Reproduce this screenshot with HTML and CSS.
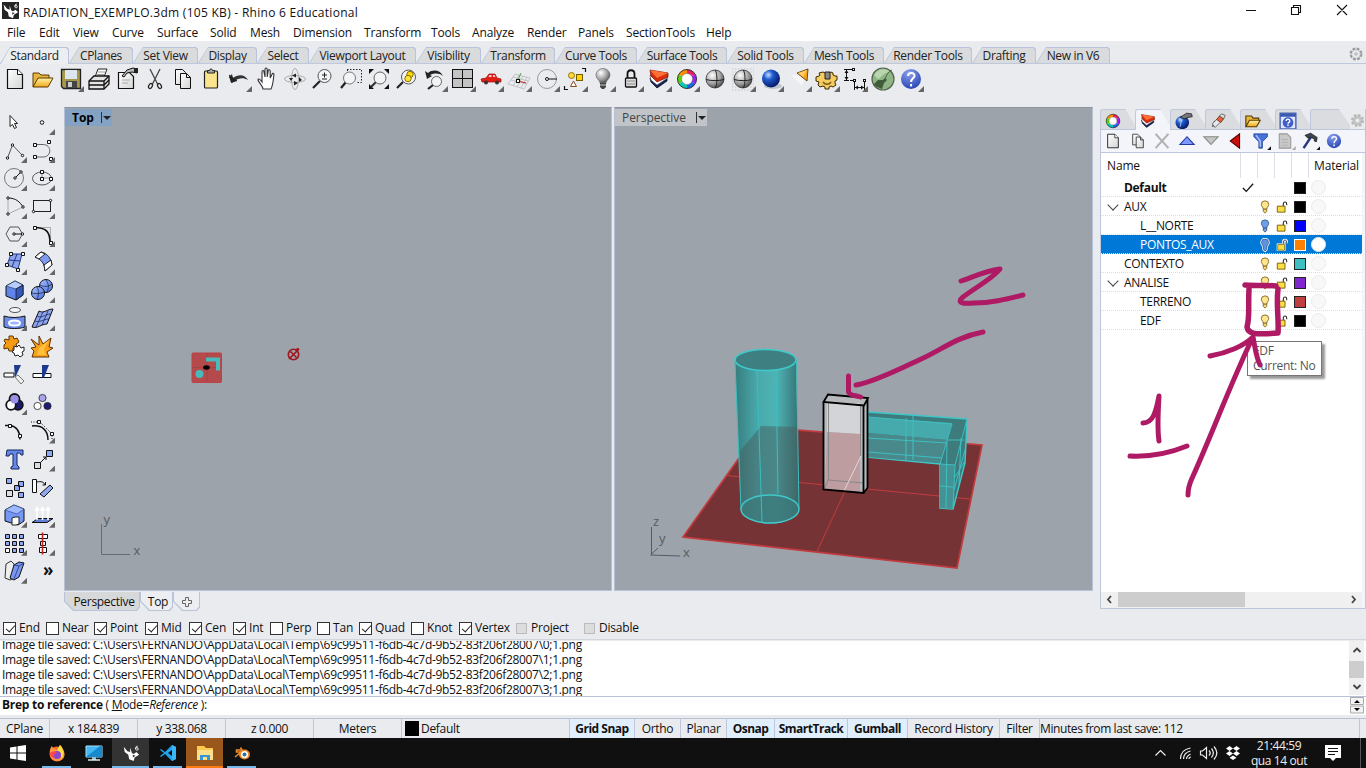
FILE: index.html
```html
<!DOCTYPE html>
<html lang="en">
<head>
<meta charset="utf-8">
<title>RADIATION_EXEMPLO.3dm (105 KB) - Rhino 6 Educational</title>
<link rel="stylesheet" href="styles.css">
</head>
<body>
<svg class="defs" aria-hidden="true">
<defs>
<linearGradient id="gY" x1="0" y1="0" x2="0" y2="1"><stop offset="0" stop-color="#fff3a8"/><stop offset="1" stop-color="#f0a818"/></linearGradient>
<linearGradient id="gW" x1="0" y1="0" x2="1" y2="1"><stop offset="0" stop-color="#fff"/><stop offset="1" stop-color="#d4d4d4"/></linearGradient>
<linearGradient id="gB" x1="0" y1="0" x2="1" y2="1"><stop offset="0" stop-color="#a9bfff"/><stop offset="1" stop-color="#4a6fe0"/></linearGradient>
<radialGradient id="gBall" cx=".35" cy=".3" r=".75"><stop offset="0" stop-color="#c5dcff"/><stop offset=".35" stop-color="#1f5bd0"/><stop offset="1" stop-color="#04145c"/></radialGradient>
<radialGradient id="gGray" cx=".35" cy=".3" r=".8"><stop offset="0" stop-color="#fff"/><stop offset=".6" stop-color="#999"/><stop offset="1" stop-color="#333"/></radialGradient>
<radialGradient id="gHelp" cx=".4" cy=".2" r=".9"><stop offset="0" stop-color="#8aa0ee"/><stop offset="1" stop-color="#1f3cae"/></radialGradient>
<linearGradient id="gCyl" x1="735" x2="799" y1="0" y2="0" gradientUnits="userSpaceOnUse"><stop offset="0" stop-color="#347b7c"/><stop offset=".35" stop-color="#45a9aa"/><stop offset=".65" stop-color="#4bb4b5"/><stop offset="1" stop-color="#317071"/></linearGradient>
</defs>
<symbol id="i-new" viewBox="0 0 28 28"><path d="M6.500 4.500h10l5 5v14h-15z" fill="url(#gW)" stroke="#111" stroke-width="1.200"/><path d="M16.500 4.500v5h5" fill="#fff" stroke="#111"/></symbol>
<symbol id="i-open" viewBox="0 0 28 28"><path d="M4 22V8h6l2 2h8v4" fill="#e8b440" stroke="#5c3b00"/><path d="M4 22l5-9h15l-5 9z" fill="url(#gY)" stroke="#5c3b00"/></symbol>
<symbol id="i-save" viewBox="0 0 28 28"><path d="M4.500 4.500h19v19h-17l-2-2z" fill="#a6994c" stroke="#222" stroke-width="1.300"/><path d="M8 5h12v9H8z" fill="#dce6ef"/><path d="M9 16h11v7H9z" fill="#444"/><path d="M11 17h4v5h-4z" fill="#ccc"/></symbol>
<symbol id="i-print" viewBox="0 0 28 28"><path d="M10 12l3-8h9l-3 8" fill="#fff" stroke="#222"/><path d="M13 7h7M12 9.500h7" stroke="#999"/><path d="M4 16l5-5h15v8l-5 5H4z" fill="#e4e4e4" stroke="#111" stroke-width="1.300"/><path d="M4 16h15l5-5M4 20h15l5-5M19 16v8" fill="none" stroke="#111" stroke-width="1.300"/></symbol>
<symbol id="i-props" viewBox="0 0 28 28"><path d="M5.500 7.500h11l4 4v12h-15z" fill="url(#gW)" stroke="#111" stroke-width="1.200"/><path d="M9 11l5-6 6-2 4 1v4l-5-1-5 1-3 4z" fill="#bbb" stroke="#111"/><path d="M21 3h4v5h-4z" fill="#222"/><path d="M9 15h8M9 18h6" stroke="#aaa"/></symbol>
<symbol id="i-cut" viewBox="0 0 28 28"><path d="M9 4l8 16M19 4l-8 16" stroke="#444" stroke-width="1.300" fill="none"/><ellipse cx="9.500" cy="21" rx="1.700" ry="2.700" transform="rotate(30 9.500 21)" fill="none" stroke="#222" stroke-width="1.200"/><ellipse cx="18.500" cy="21" rx="1.700" ry="2.700" transform="rotate(-30 18.500 21)" fill="none" stroke="#222" stroke-width="1.200"/></symbol>
<symbol id="i-copy" viewBox="0 0 28 28"><path d="M6.500 4.500h7l3 3v12h-10z" fill="url(#gW)" stroke="#111"/><path d="M11.500 8.500h6l4 4v11h-10z" fill="url(#gW)" stroke="#111"/><path d="M17.500 8.500v4h4" fill="none" stroke="#111"/></symbol>
<symbol id="i-paste" viewBox="0 0 28 28"><rect x="7.500" y="6" width="13" height="17" rx="1" fill="#fbe58c" stroke="#222" stroke-width="1.200"/><path d="M10.500 8V5.500h2c0-2 3-2 3 0h2V8z" fill="#aaa" stroke="#222"/></symbol>
<symbol id="i-undo" viewBox="0 0 28 28"><path d="M4 12l3 6 2-2c5-3 9-4 14-1-3-6-10-6-15-2l-1-4z" fill="#333"/><path d="M4 10l8 6" stroke="#222"/><path d="M4 10l2 8 6-2z" fill="#222"/></symbol>
<symbol id="i-hand" viewBox="0 0 28 28"><path d="M10 24c0-3-4-6-5-9 0-2 2-1 4 2V7c0-2 2-2 2 0l1 5V4.500c0-2 2.200-2 2.200 0V12l1-6c0-2 2-1.500 2 0V13l2-4c1-1.500 2-.5 1.700 1C20 17 20 20 18 24z" fill="#fff" stroke="#333" stroke-width="1.100"/></symbol>
<symbol id="i-orbit" viewBox="0 0 28 28"><ellipse cx="14" cy="14" rx="10.500" ry="3.500" fill="none" stroke="#aaa"/><ellipse cx="14" cy="14" rx="3.500" ry="10.500" fill="none" stroke="#aaa"/><path d="M11 10.500l4-2v4zM17 18l-4 2.500V16zM18 12l3 3-3 2zM10 16l-2-3h4z" fill="#222"/></symbol>
<symbol id="i-zoom" viewBox="0 0 28 28"><path d="M11 16l-7 7" stroke="#222" stroke-width="2.200"/><circle cx="15.500" cy="11" r="6.500" fill="#f2f4f6" stroke="#555"/><path d="M13 10h5M15.500 7.500v5M13 14h5" stroke="#222"/></symbol>
<symbol id="i-zoomwin" viewBox="0 0 28 28"><path d="M10 4.500h14.500v13H19M10.500 4.500v4" fill="none" stroke="#222" stroke-dasharray="1.500 1.500"/><path d="M9 17l-5 6" stroke="#222" stroke-width="2.200"/><circle cx="12.500" cy="13" r="6" fill="#f2f4f6" stroke="#777"/></symbol>
<symbol id="i-zoomext" viewBox="0 0 28 28"><path d="M4 4h5L4 9zM24 4h-5l5 5zM4 24h5l-5-5zM24 24h-5l5-5z" fill="#111"/><path d="M11 17l-5 5" stroke="#333" stroke-width="2.200"/><circle cx="15" cy="13" r="6" fill="#f2f4f6" stroke="#666"/></symbol>
<symbol id="i-zoomsel" viewBox="0 0 28 28"><path d="M10 17l-6 6" stroke="#222" stroke-width="2.200"/><circle cx="15.500" cy="12" r="7" fill="#f2f4f6" stroke="#555"/><circle cx="17" cy="9.500" r="3.200" fill="#ffd900" stroke="#866d00"/><circle cx="15" cy="13.500" r="3.200" fill="#ffe52e" stroke="#866d00"/></symbol>
<symbol id="i-undoview" viewBox="0 0 28 28"><path d="M4 6l2 8 5-3-2-1c5-2 9-2 13 1-3-6-10-7-15-3z" fill="#222"/><path d="M12 20l-5 4" stroke="#222" stroke-width="2.200"/><circle cx="15.500" cy="16.500" r="5" fill="#f2f4f6" stroke="#666"/></symbol>
<symbol id="i-four" viewBox="0 0 28 28"><rect x="3.500" y="4.500" width="20" height="18" fill="#c4c4c4" stroke="#111"/><path d="M13.500 4v19M3 13.500h21" stroke="#111"/></symbol>
<symbol id="i-car" viewBox="0 0 28 28"><path d="M4 14l5-1 3-4h6l2 4 4 1v3H5z" fill="#e31e16" stroke="#9a0c0c" stroke-width=".7"/><path d="M11.500 12l1-2h2v2zM16 10h1.500l1 2H16z" fill="#ffd2d0"/><circle cx="9" cy="17.500" r="2" fill="#333"/><circle cx="20" cy="17.500" r="2" fill="#333"/></symbol>
<symbol id="i-cplane" viewBox="0 0 28 28"><path d="M3 19L10 9l15 4-6 11zM6 15l16 4M8 12l15 4M14 10L8 21M18 11l-6 11M22 12l-6 11" fill="none" stroke="#b9b9b9" stroke-width=".8"/><path d="M13 16l8 2" stroke="#d02020"/><path d="M13 15l3-7" stroke="#4a4"/><rect x="11.500" y="14.500" width="3" height="3" fill="#fff" stroke="#111"/></symbol>
<symbol id="i-cir" viewBox="0 0 28 28"><circle cx="14" cy="14" r="9.500" fill="none" stroke="#999"/><circle cx="14" cy="14" r="1.500" fill="#fff" stroke="#111"/><path d="M16 14h8" stroke="#111"/></symbol>
<symbol id="i-shapes" viewBox="0 0 28 28"><path d="M21 3.500h3.500V7M3.500 21v3.500H7" fill="none" stroke="#111" stroke-width="1.200"/><circle cx="10.500" cy="10.500" r="3" fill="#ffd83a" stroke="#92730a"/><rect x="15.500" y="9.500" width="6" height="6" fill="#ffd400" stroke="#745a00"/><path d="M12.500 16l3 5.500h-6z" fill="#fff" stroke="#8a4a20"/></symbol>
<symbol id="i-bulb" viewBox="0 0 28 28"><path d="M11 18c0-3-4-4-4-8a7 6.500 0 0 1 14 0c0 4-4 5-4 8z" fill="url(#gGray)" stroke="#777" stroke-width=".8"/><path d="M11 18h6v4l-2 2h-2l-2-2z" fill="#444"/><path d="M11 20h6" stroke="#ccc"/></symbol>
<symbol id="i-lock" viewBox="0 0 28 28"><path d="M10.500 13V9c0-5 7-5 7 0v4" fill="none" stroke="#111" stroke-width="1.800"/><rect x="8.500" y="13" width="11" height="9" rx="1" fill="#ddd" stroke="#111" stroke-width="1.300"/><path d="M10 16h8M10 19h8" stroke="#888"/></symbol>
<symbol id="i-layers" viewBox="0 0 28 28"><path d="M5 13l6-3 11 3v3l-10 7-6-6z" fill="#14235f" stroke="#111" stroke-width=".8"/><path d="M5 10l6 5 11-6 .5 4L12 20l-6-5z" fill="#fff" stroke="#555" stroke-width=".6"/><path d="M5 5l18 3v4l-11 5-6-6z" fill="#d92d08" stroke="#611" stroke-width=".7"/><path d="M5 5l18 3-11 5z" fill="#ff7036"/></symbol>
<symbol id="i-wheel" viewBox="0 0 28 28"><g fill="none" stroke-width="4"><path d="M14 6.500a7.500 7.500 0 0 1 6.500 3.700" stroke="#e91e63"/><path d="M20.500 10.200a7.500 7.500 0 0 1 0 7.600" stroke="#a31cf0"/><path d="M20.500 17.800a7.500 7.500 0 0 1-6.500 3.700" stroke="#1d63ed"/><path d="M14 21.500a7.500 7.500 0 0 1-6.500-3.700" stroke="#00c8b4"/><path d="M7.500 17.800a7.500 7.500 0 0 1 0-7.600" stroke="#5bd30c"/><path d="M7.500 10.200A7.500 7.500 0 0 1 14 6.500" stroke="#ff8c00"/></g><circle cx="14" cy="14" r="9.500" fill="none" stroke="#333"/><circle cx="14" cy="14" r="5.500" fill="#fff" stroke="#555" stroke-width=".5"/></symbol>
<symbol id="i-gball" viewBox="0 0 28 28"><circle cx="14" cy="14" r="9" fill="url(#gGray)" stroke="#333" stroke-width=".8"/><path d="M5 14.500c5 1.500 13 1.500 18 0M14.500 5c2 5 2 13 0 18" stroke="#222" fill="none"/></symbol>
<symbol id="i-dball" viewBox="0 0 28 28"><path d="M3 4h22M3 7h22M3 10h22M3 13h22M3 16h22M3 19h22M3 22h22M3 25h22" stroke="#c5c5c5" stroke-dasharray="1.500 1.500"/><circle cx="14" cy="14" r="9" fill="url(#gGray)" stroke="#333" stroke-width=".8"/><path d="M5 14.500c5 1.500 13 1.500 18 0M14.500 5c2 5 2 13 0 18" stroke="#222" fill="none"/></symbol>
<symbol id="i-bball" viewBox="0 0 28 28"><ellipse cx="16" cy="21" rx="9" ry="3" fill="#bcc4cf"/><circle cx="14" cy="13.500" r="9" fill="url(#gBall)"/></symbol>
<symbol id="i-cone" viewBox="0 0 28 28"><path d="M5 9l12 12 3-9z" fill="#f7f7f7" opacity=".8"/><path d="M12 8l11-4-1 12z" fill="#f7a51e" stroke="#443000" stroke-width=".8"/><path d="M13 8l9-3-4 7z" fill="#ffcb62"/></symbol>
<symbol id="i-gear" viewBox="0 0 28 28"><path d="M10 7l2 1h4l2-1 2 1v2l2 1h2v4l-2 1v2l1 2-3 2-2-1-2 1v2h-4v-2l-2-1-3 1-2-2 1-3-3-1v-4l3-1 1-1-1-2z" fill="#f5cc62" stroke="#3d2a00"/><path d="M12 7h5v7h-5z" fill="#888" stroke="#222"/><path d="M10 17c2 3 6 3 8 0" fill="none" stroke="#7b5a12" stroke-width="1.500"/></symbol>
<symbol id="i-dims" viewBox="0 0 28 28"><path d="M7 4.500h6M9 15.500h5M5.500 5v10M3 4.500h5M3 15.500h5M13.500 16v9M23.500 16v9M14 22.500h9" fill="none" stroke="#111"/><path d="M3.500 8l2-3 2 3zM3.500 12l2 3 2-3zM17 20.500l-3 2 3 2zM20 20.500l3 2-3 2z" fill="#111"/><g fill="#fff" stroke="#111"><rect x="11.500" y="3.500" width="2" height="2"/><rect x="12.500" y="14.500" width="2" height="2"/><rect x="22.500" y="14.500" width="2" height="2"/></g></symbol>
<symbol id="i-green" viewBox="0 0 28 28"><circle cx="14" cy="14" r="11" fill="#8fb585" stroke="#52634e" stroke-width="1.200"/><path d="M5 10c5-8 13-6 16-3-6 0-9 6-12 7z" fill="#b9d4ae"/><path d="M5 19l4-4 5 0 2-2 2 2-3 3-2 6-7-3z" fill="#405d3a"/><path d="M16 14c2-5 4-8 7-9" stroke="#375331" fill="none" stroke-width=".8"/></symbol>
<symbol id="i-help" viewBox="0 0 28 28"><circle cx="14" cy="14" r="10" fill="url(#gHelp)"/><path d="M11 11c0-4 7-4 6.500 0-.4 2.500-3.400 2.500-3.400 6M14.100 19v2.500" fill="none" stroke="#fff" stroke-width="2"/></symbol>
<symbol id="i-tuner" viewBox="0 0 28 28"><circle cx="14" cy="14" r="7.500" fill="none" stroke="#999" stroke-width="3" stroke-dasharray="4 1.890"/><circle cx="14" cy="14" r="6" fill="#e9ebef" stroke="#aaa"/><circle cx="14" cy="14" r="1.800" fill="none" stroke="#999"/></symbol>

<symbol id="t-ptr" viewBox="0 0 28 28"><path d="M10 7.500v11l2.500-2 2 4 2-1-2-4h3z" fill="#fff" stroke="#222"/></symbol>
<symbol id="t-pt" viewBox="0 0 28 28"><circle cx="14" cy="14.500" r="1.800" fill="#fff" stroke="#111"/></symbol>
<symbol id="t-poly" viewBox="0 0 28 28"><path d="M7.500 22l5-13 10 10.500" fill="none" stroke="#555"/><g fill="#fff" stroke="#111"><circle cx="7.500" cy="22" r="1.200"/><circle cx="12.500" cy="9" r="1.200"/><circle cx="22.500" cy="19.500" r="1.200"/></g></symbol>
<symbol id="t-curve" viewBox="0 0 28 28"><path d="M7 8.500h8c9 0 9 12.500 0 12.500H7" fill="none" stroke="#666"/><g fill="#fff" stroke="#111"><path d="M5.500 7.500h3v3h-3zM5.500 19.500h3v3h-3zM19.500 4.500h3v3h-3zM21.500 21.500h3v3h-3z"/></g></symbol>
<symbol id="t-circ" viewBox="0 0 28 28"><circle cx="14" cy="14" r="9.500" fill="none" stroke="#777"/><path d="M15 14l6-6" stroke="#111"/><circle cx="15" cy="14" r="1.200" fill="#fff" stroke="#111"/><circle cx="21" cy="8" r="1.200" fill="#fff" stroke="#111"/></symbol>
<symbol id="t-ell" viewBox="0 0 28 28"><ellipse cx="14" cy="14.500" rx="9.500" ry="6.500" fill="none" stroke="#555"/><path d="M14 7v7h9" fill="none" stroke="#999"/><g fill="#fff" stroke="#111"><path d="M12.500 6.500h3v3h-3zM12.500 13.500h3v3h-3zM21.500 13.500h3v3h-3z"/></g></symbol>
<symbol id="t-arc" viewBox="0 0 28 28"><path d="M8 6c8 0 12 4 15 9" fill="none" stroke="#111"/><path d="M8 6v16l15-7" fill="none" stroke="#aaa"/><g fill="#fff" stroke="#111"><circle cx="8" cy="6" r="1.200"/><circle cx="8" cy="22" r="1.200"/><circle cx="23" cy="15" r="1.200"/></g></symbol>
<symbol id="t-rect" viewBox="0 0 28 28"><rect x="5.500" y="8.500" width="17" height="11" fill="none" stroke="#222"/><circle cx="22.500" cy="8.500" r="1.200" fill="#fff" stroke="#111"/><circle cx="5.500" cy="19.500" r="1.200" fill="#fff" stroke="#111"/></symbol>
<symbol id="t-hex" viewBox="0 0 28 28"><path d="M6 14l4-7h8.500l4 7-4 7H10z" fill="none" stroke="#555"/><path d="M14 14h8" stroke="#111"/><circle cx="14" cy="14" r="1.200" fill="#fff" stroke="#111"/><circle cx="22.500" cy="14" r="1.200" fill="#fff" stroke="#111"/></symbol>
<symbol id="t-fil" viewBox="0 0 28 28"><path d="M6 7.500h16.500V23" fill="none" stroke="#aaa"/><path d="M6 7.500c12 0 16 4 16 15" fill="none" stroke="#111" stroke-width="1.700"/><path d="M5.500 6.500h3v3h-3zM21.500 21.500h3v3h-3z" fill="#fff" stroke="#111"/></symbol>
<symbol id="t-surf" viewBox="0 0 28 28"><path d="M11 6h11l-4 15-11-4z" fill="#8fa5ea" stroke="#223a8c"/><path d="M17 6l-5 13M9 12l11 1" stroke="#223a8c"/><path d="M9.500 4.500h3v3h-3zM21.500 4.500h3v3h-3zM5.500 15.500h3v3h-3zM16.500 20.500h3v3h-3z" fill="#fff" stroke="#111"/></symbol>
<symbol id="t-sweep" viewBox="0 0 28 28"><path d="M7 9l6-5c6 1 10 6 11 13l-7 6c0-7-4-12-10-14z" fill="#7e9af0" stroke="#223"/><path d="M7 9l6-5 4 2-6 5zM16 17l7-5 1 5-7 6z" fill="#fff" stroke="#222"/></symbol>
<symbol id="t-box" viewBox="0 0 28 28"><path d="M6 10l9-5 8 4v10l-7 5-10-4z" fill="#6184e8" stroke="#111"/><path d="M6 10l9-5 8 4-7 4z" fill="#b9ccff" stroke="#246" stroke-width=".7"/><path d="M16 13v11l7-5V9z" fill="#3458b8" stroke="#111" stroke-width=".7"/></symbol>
<symbol id="t-sph" viewBox="0 0 28 28"><circle cx="18" cy="10" r="6.500" fill="url(#gB)" stroke="#111"/><circle cx="10" cy="17" r="6.500" fill="url(#gB)" stroke="#111"/><path d="M12 9c4 2 8 2 12-1M18 4c3 4 3 8 1 12M4 17c4 1 8 1 12-1M9 11c2 4 2 8 0 12" fill="none" stroke="#123" stroke-width=".7"/></symbol>
<symbol id="t-ring" viewBox="0 0 28 28"><ellipse cx="15" cy="6" rx="5.500" ry="2.500" fill="#f5f5f5" stroke="#555"/><path d="M4 12c6 2 14 2 21 0v11c-6 2-15 2-21 0z" fill="#6c8ce8" stroke="#111"/><ellipse cx="14.500" cy="19" rx="5.500" ry="2.500" fill="#9db4ff" stroke="#fff" stroke-width="2"/></symbol>
<symbol id="t-mesh" viewBox="0 0 28 28"><path d="M11 7c5 3 8-2 14-2l-6 15c-6 0-9 5-15 3z" fill="#8fa5e8" stroke="#111"/><path d="M9 12c5 3 8-2 14-2M7 17c5 2 8-2 14-2M15 8L8 23M20 7l-6 14" stroke="#17296e" fill="none" stroke-width=".8"/></symbol>
<symbol id="t-puz" viewBox="0 0 28 28"><path d="M5 7l4 1V4h4l1 3 3-1 2 4-3 2 1 3-4 1v3H9l-1-3-4 1v-4l2-2-2-2z" fill="#f59a12" stroke="#5c3400"/><path d="M14 14l3 1 2-2 2 3 3-1v4l-2 1 1 3-3 2-2-2-3 1-1-3-2-1 2-2z" fill="#fff" stroke="#222"/></symbol>
<symbol id="t-boom" viewBox="0 0 28 28"><path d="M3 7l8 6 0-9 4 8 8-6-2 9 4 1-6 4 2 5H4l2-6-3-3 5-1z" fill="#f9a11b" stroke="#613100"/><path d="M9 23l2-7 10-8-5 9 2 6z" fill="#ffc13d"/></symbol>
<symbol id="t-trim" viewBox="0 0 28 28"><path d="M4 13h10v4H4z" fill="#fff" stroke="#111"/><path d="M14 5h7l-6 13z" fill="#1d3a8c"/><path d="M15 17l3-2 6 6-3 3z" fill="#eee" stroke="#777"/></symbol>
<symbol id="t-split" viewBox="0 0 28 28"><path d="M5 13.500h18v4H5z" fill="#fff" stroke="#111"/><path d="M14 5h7l-5 12.500h-2z" fill="#1d3a8c"/></symbol>
<symbol id="t-bool" viewBox="0 0 28 28"><g stroke="#111" stroke-width="1.800"><circle cx="14.500" cy="11" r="5" fill="#a49ced"/><circle cx="18" cy="17" r="4.800" fill="#1c1c6e"/><circle cx="11" cy="17" r="4.800" fill="#fff"/></g><circle cx="14.500" cy="11.500" r="4" fill="#9890e8"/></symbol>
<symbol id="t-cir3" viewBox="0 0 28 28"><g stroke="#222" stroke-width=".8"><circle cx="14.500" cy="10" r="3.600" fill="#a9a4ee"/><circle cx="19.500" cy="18" r="3.600" fill="#1c1c78"/><circle cx="9.500" cy="18" r="3.600" fill="#fff"/></g></symbol>
<symbol id="t-pts" viewBox="0 0 28 28"><path d="M5 8.500h5c7 1 10 6 10 14" fill="none" stroke="#111" stroke-width="1.400"/><path d="M8.500 7.500h3v3h-3zM18.500 17.500h3v3h-3z" fill="#fff" stroke="#111"/></symbol>
<symbol id="t-ctl" viewBox="0 0 28 28"><path d="M4 9c10-1 16 4 16 14" fill="none" stroke="#111" stroke-width="1.500"/><path d="M3 5h9l12 12v6" fill="none" stroke="#111" stroke-dasharray="1 1.500"/><path d="M9.500 3.500h3v3h-3zM22.500 15.500h3v3h-3z" fill="#fff" stroke="#111"/></symbol>
<symbol id="t-T" viewBox="0 0 28 28"><path d="M7 5h16v5h-2l-1-2h-3v12l2 2v2h-8v-2l2-1V9h-3l-1 2H6z" fill="#6688e8" stroke="#14245c"/></symbol>
<symbol id="t-move" viewBox="0 0 28 28"><path d="M12 18l6-6M18 15v-3h-3" fill="none" stroke="#111"/><path d="M18.500 5.500h6v6h-6z" fill="#8da7f4" stroke="#111"/><path d="M6.500 17.500h6v6h-6z" fill="#ddd" stroke="#111"/></symbol>
<symbol id="t-blk" viewBox="0 0 28 28"><g fill="#8da7f4" stroke="#111"><path d="M6.500 5.500h5v5h-5zM18.500 8.500h5v5h-5zM14.500 12.500h5v5h-5zM18.500 19.500h5v5h-5z"/><path d="M6.500 17.500h6v6h-6z" fill="#ddd"/></g></symbol>
<symbol id="t-rot" viewBox="0 0 28 28"><path d="M4.500 6.500h4v13h-4z" fill="#fff" stroke="#111"/><path d="M9 9c4-1 7 0 8 3M17.500 9v3h-3" fill="none" stroke="#111"/><path d="M12 21l10-9 3 3-9 9z" fill="#90a8ee" stroke="#111"/></symbol>
<symbol id="t-cube2" viewBox="0 0 28 28"><path d="M5 9l9-5 10 4v12l-6 4-13-4z" fill="#7496f5" stroke="#111"/><path d="M5 9l9-5 10 4-7 5z" fill="#9eb9ff" stroke="#34539d" stroke-width=".7"/><path d="M12 17l3-1h4v7l-3 1h-4z" fill="#fff" stroke="#222"/></symbol>
<symbol id="t-ext" viewBox="0 0 28 28"><path d="M4 21.500l6-4h15l-6 4z" fill="#607fd5" stroke="#111"/><path d="M9 19V8M14.500 19V8M20 19V8M7 9.500l2-3 2 3M12.500 9.500l2-3 2 3M18 9.500l2-3 2 3" fill="none" stroke="#fff" stroke-width="1.600"/></symbol>
<symbol id="t-arr" viewBox="0 0 28 28"><g fill="#8da7f4" stroke="#111"><path d="M5.500 5.500h4v4h-4zM12.500 5.500h4v4h-4zM19.500 5.500h4v4h-4zM5.500 12.500h4v4h-4zM12.500 12.500h4v4h-4zM19.500 12.500h4v4h-4zM12.500 19.500h4v4h-4zM19.500 19.500h4v4h-4z"/><path d="M5.500 19.500h4v4h-4z" fill="#fff"/></g></symbol>
<symbol id="t-aln" viewBox="0 0 28 28"><g fill="#fff" stroke="#111"><path d="M10.500 5.500h9v4h-9zM12.500 12.500h5v4h-5zM11.500 18.500h7v5h-7z"/></g><path d="M14.500 3.500v22" stroke="#c32020" stroke-width="1.600"/></symbol>
<symbol id="t-bend" viewBox="0 0 28 28"><path d="M6 7l5-3 3 3v14l-4 2-5-2z" fill="#eee" stroke="#333"/><path d="M14 8l5-3 5 1-5 14-5 3-4-2z" fill="#7896f0" stroke="#111"/><path d="M14 8l5 1 5-3M19 9l-5 13" fill="none" stroke="#243879" stroke-width=".8"/></symbol>

<symbol id="p-folder" viewBox="0 0 28 28"><path d="M4 22V7h8l2 3h8v3" fill="#eab93c" stroke="#583900" stroke-width="1.600"/><path d="M4 22l5-9h15l-5 9z" fill="url(#gY)" stroke="#583900" stroke-width="1.600"/></symbol>
<symbol id="p-brush" viewBox="0 0 28 28"><path d="M6 22l3-8 4 4z" fill="#888" stroke="#444"/><path d="M6 18l7-7 5 4-8 8z" fill="#e8e8e8" stroke="#444"/><path d="M12 12l4-5 6 4-4 5z" fill="#e86239" stroke="#60210d"/><path d="M16 7l3-3 5 2-2 5z" fill="#ddd" stroke="#444"/></symbol>
<symbol id="p-bomb" viewBox="0 0 28 28"><circle cx="13" cy="16" r="9.500" fill="url(#gBall)"/><path d="M10 9l9-6 7 1 1 4-6 1-5 2z" fill="#777" stroke="#111"/><path d="M12 12l-2 10" stroke="#dce8ff"/></symbol>
<symbol id="p-win" viewBox="0 0 28 28"><path d="M3 3h22v22H3z" fill="#dfe5ff" stroke="#4b67ae" stroke-width="2"/><path d="M3 3h22v5H3z" fill="#3c58b0"/><circle cx="14" cy="16" r="7.500" fill="#4060c8"/><path d="M11.500 14c0-4 5-3 5 0 0 2-2.500 2-2.500 4M14 19v2" stroke="#fff" fill="none" stroke-width="2"/></symbol>
<symbol id="p-x" viewBox="0 0 28 28"><path d="M5 4l18 20M23 4L5 24" stroke="#b1b1b1" stroke-width="3"/></symbol>
<symbol id="p-up" viewBox="0 0 28 28"><path d="M4 19L14 8l10 11z" fill="#7c9aff" stroke="#223a9c" stroke-width="1.500"/></symbol>
<symbol id="p-dn" viewBox="0 0 28 28"><path d="M4 8h20L14 19z" fill="#c5c5c5" stroke="#888" stroke-width="1.500"/></symbol>
<symbol id="p-left" viewBox="0 0 28 28"><path d="M6 14L19 4v20z" fill="#c80e0e" stroke="#500" stroke-width="1.500"/></symbol>
<symbol id="p-fun" viewBox="0 0 28 28"><path d="M4 4h19v4l-7 7v9h-5v-9L4 8z" fill="#4770d8" stroke="#17388b"/><path d="M7 6l6 8v8" fill="none" stroke="#a8c0ff" stroke-width="2"/></symbol>
<symbol id="p-doc" viewBox="0 0 28 28"><path d="M6 4h11l5 5v15H6z" fill="#c9c9c9" stroke="#999" stroke-width="1.500"/><path d="M9 12h9M9 16h9M9 20h9" stroke="#aaa"/></symbol>
<symbol id="p-ham" viewBox="0 0 28 28"><path d="M5 24L15 9" stroke="#28377d" stroke-width="3.500"/><path d="M7 6l8-3 9 6-1 6-3-1v-3l-5-2-4 1z" fill="#3c4652" stroke="#111"/></symbol>
<symbol id="l-on" viewBox="0 0 12 16"><path d="M4 10.500C4 8 1.800 7.500 1.800 5a4.200 4 0 0 1 8.400 0C10.200 7.500 8 8 8 10.500z" fill="#ffe58b" stroke="#795d20"/><path d="M4 10.500h4V13l-2 2-2-2z" fill="#efd778" stroke="#795d20" stroke-width=".9"/></symbol>
<symbol id="l-off" viewBox="0 0 12 16"><path d="M4 10.500C4 8 1.800 7.500 1.800 5a4.200 4 0 0 1 8.400 0C10.200 7.500 8 8 8 10.500z" fill="#6da0e8" stroke="#35568c"/><path d="M4 10.500h4V13l-2 2-2-2z" fill="#78a0d7" stroke="#334d7d" stroke-width=".9"/></symbol>
<symbol id="l-un" viewBox="0 0 14 16"><path d="M8.500 7V4.500c0-3 4-3 4 0V6" fill="none" stroke="#222" stroke-width="1.200"/><path d="M1.500 7h9v7h-9z" fill="#fddf45" stroke="#6c5200"/></symbol>
<symbol id="l-unsel" viewBox="0 0 14 16"><path d="M8.500 7V4.500c0-3 4-3 4 0V6" fill="none" stroke="#fff" stroke-width="3"/><path d="M.8 6.200h10.400v8.600H.8z" fill="#fff"/><path d="M8.500 7V4.500c0-3 4-3 4 0V6" fill="none" stroke="#222"/><path d="M2 7.500h8V14H2z" fill="#fddf45" stroke="#6c5200" stroke-width=".8"/></symbol>
<symbol id="l-offsel" viewBox="0 0 12 16"><path d="M4 10.500C4 8 1.800 7.500 1.800 5a4.200 4 0 0 1 8.400 0C10.200 7.500 8 8 8 10.500V13l-2 2-2-2z" fill="#fff" stroke="#fff" stroke-width="2.400"/><path d="M4 10.500C4 8 2 7.500 2 5a4 3.800 0 0 1 8 0C10 7.500 8 8 8 10.500V13l-2 2-2-2z" fill="#5f93e0" stroke="#2f4e80" stroke-width=".8"/></symbol>
<symbol id="rhino" viewBox="0 0 20 20"><path d="M2 3l1 6 4 3 1 5 5 2 1-4 5-3-3-3-3 2-2-1-2-6 0 5-3-1z" fill="#fff"/><path d="M12 12l3 1-3 2" fill="#333"/><path d="M17.500 2.500c-3-.5-3 4.500-1 4.500s2-3 0-3-1 1.500-1 1.500" stroke="#fff" fill="none"/></symbol>
</svg>

<header>
<div class="titlebar"><svg class="app"><use href="#rhino"/></svg><span>RADIATION_EXEMPLO.3dm (105 KB) - Rhino 6 Educational</span>
<svg class="wc" viewBox="0 0 120 20"><path d="M5 10.500h10M50.500 7.500h7v7h-7zM52.500 7.500v-2h7v7h-2M96 5l10 10M106 5L96 15" fill="none" stroke="#111" stroke-width="1.100"/></svg></div>
<nav class="menu"><span>File</span><span>Edit</span><span>View</span><span>Curve</span><span>Surface</span><span>Solid</span><span>Mesh</span><span>Dimension</span><span>Transform</span><span>Tools</span><span>Analyze</span><span>Render</span><span>Panels</span><span>SectionTools</span><span>Help</span></nav>
</header>
<nav class="tabs"><span class="on">Standard</span><span>CPlanes</span><span>Set View</span><span>Display</span><span>Select</span><span>Viewport Layout</span><span>Visibility</span><span>Transform</span><span>Curve Tools</span><span>Surface Tools</span><span>Solid Tools</span><span>Mesh Tools</span><span>Render Tools</span><span>Drafting</span><span>New in V6</span><svg class="tuner"><use href="#i-tuner"/></svg></nav>
<div class="toolbar">
<i><svg><use href="#i-new"/></svg></i><i><svg><use href="#i-open"/></svg></i><i class="m"><svg><use href="#i-save"/></svg></i><i><svg><use href="#i-print"/></svg></i><i><svg><use href="#i-props"/></svg></i><i><svg><use href="#i-cut"/></svg></i><i><svg><use href="#i-copy"/></svg></i><i><svg><use href="#i-paste"/></svg></i><i class="m"><svg><use href="#i-undo"/></svg></i><i><svg><use href="#i-hand"/></svg></i><i><svg><use href="#i-orbit"/></svg></i><i><svg><use href="#i-zoom"/></svg></i><i><svg><use href="#i-zoomwin"/></svg></i><i><svg><use href="#i-zoomext"/></svg></i><i><svg><use href="#i-zoomsel"/></svg></i><i class="m"><svg><use href="#i-undoview"/></svg></i><i class="m"><svg><use href="#i-four"/></svg></i><i class="m"><svg><use href="#i-car"/></svg></i><i class="m"><svg><use href="#i-cplane"/></svg></i><i class="m"><svg><use href="#i-cir"/></svg></i><i class="m"><svg><use href="#i-shapes"/></svg></i><i class="m"><svg><use href="#i-bulb"/></svg></i><i class="m"><svg><use href="#i-lock"/></svg></i><i class="m"><svg><use href="#i-layers"/></svg></i><i class="m"><svg><use href="#i-wheel"/></svg></i><i><svg><use href="#i-gball"/></svg></i><i class="m"><svg><use href="#i-dball"/></svg></i><i class="m"><svg><use href="#i-bball"/></svg></i><i class="m"><svg><use href="#i-cone"/></svg></i><i class="m"><svg><use href="#i-gear"/></svg></i><i class="m"><svg><use href="#i-dims"/></svg></i><i><svg><use href="#i-green"/></svg></i><i class="m"><svg><use href="#i-help"/></svg></i>
</div>
<main>
<aside class="tools">
<i><svg><use href="#t-ptr"/></svg></i><i class="m"><svg><use href="#t-pt"/></svg></i>
<i class="m"><svg><use href="#t-poly"/></svg></i><i class="m"><svg><use href="#t-curve"/></svg></i>
<i class="m"><svg><use href="#t-circ"/></svg></i><i class="m"><svg><use href="#t-ell"/></svg></i>
<i class="m"><svg><use href="#t-arc"/></svg></i><i class="m"><svg><use href="#t-rect"/></svg></i>
<i class="m"><svg><use href="#t-hex"/></svg></i><i class="m"><svg><use href="#t-fil"/></svg></i>
<i class="m"><svg><use href="#t-surf"/></svg></i><i class="m"><svg><use href="#t-sweep"/></svg></i>
<i class="m"><svg><use href="#t-box"/></svg></i><i class="m"><svg><use href="#t-sph"/></svg></i>
<i class="m"><svg><use href="#t-ring"/></svg></i><i class="m"><svg><use href="#t-mesh"/></svg></i>
<i><svg><use href="#t-puz"/></svg></i><i><svg><use href="#t-boom"/></svg></i>
<i><svg><use href="#t-trim"/></svg></i><i><svg><use href="#t-split"/></svg></i>
<i class="m"><svg><use href="#t-bool"/></svg></i><i><svg><use href="#t-cir3"/></svg></i>
<i><svg><use href="#t-pts"/></svg></i><i class="m"><svg><use href="#t-ctl"/></svg></i>
<i><svg><use href="#t-T"/></svg></i><i class="m"><svg><use href="#t-move"/></svg></i>
<i><svg><use href="#t-blk"/></svg></i><i><svg><use href="#t-rot"/></svg></i>
<i class="m"><svg><use href="#t-cube2"/></svg></i><i class="m"><svg><use href="#t-ext"/></svg></i>
<i class="m"><svg><use href="#t-arr"/></svg></i><i class="m"><svg><use href="#t-aln"/></svg></i>
<i class="m"><svg><use href="#t-bend"/></svg></i><i class="raq">»</i>
</aside>
<section class="vp">
<div class="vlabel act"><span>Top</span><b></b></div>
<svg class="scene" viewBox="65 108 546 482">
<rect x="192" y="353" width="29.500" height="29.500" rx="1" fill="#b54a4c" stroke="#bd4145"/><path d="M207 353v29M192 367.500h30" stroke="#a74347"/>
<path d="M206 357.500h14v13h-4v-9h-10z" fill="#48bcbd"/><circle cx="199.500" cy="374" r="4" fill="#4ab9ba"/><ellipse cx="206.500" cy="367.500" rx="3.300" ry="2.200" fill="#000"/>
<g fill="none" stroke="#9f161e" stroke-width="1.600"><circle cx="293.500" cy="354.500" r="5.200"/><path d="M289 359l10-10M290.500 351.500l6 6M295 350l4-1.500"/></g>
<path d="M101.500 524v30.500H130" fill="none" stroke="#676c72"/><g fill="#575c62" font-size="13"><text x="103.500" y="524">y</text><text x="133.500" y="555">x</text></g>
</svg></section>
<section class="vp">
<div class="vlabel wide"><span>Perspective</span><b></b></div>
<svg class="scene" viewBox="614 108 478 482">
<path d="M761 427l221 18-25 123-274-31z" fill="#763335" stroke="#c23b3f" stroke-width="1.700"/>
<path d="M727 475.500l243 23.500M817 551.500l44-95" stroke="#c23c3f" fill="none"/>
<path d="M868 412l99 7-2 44-12 46-13-1v-44l-73-7z" fill="#3d7b7d" stroke="#3fc7c8" stroke-width="1.500"/>
<path d="M868 417l84 6-5 17-79-7z" fill="#46a9ab"/><path d="M868 433l79 7-7 23-73-6z" fill="#4a898b"/><path d="M940 464l15 1-2 44-13-1z" fill="#459294"/>
<path d="M868 417l84 7-12 40M940 464l15 1 12-46M955 465l-2 44M868 438l79 5M948 440h16M868 452l74 6M906 418v42M913 414v46M947 441l-1 67M940 486l13 1M955 477l10-16M961 438l-2 46M965 450l-11 40" fill="none" stroke="#3fbfc1"/>
<path d="M735 361l6 149a29 14 0 0 0 58-1l-3-149a31 10 0 0 0-61 1z" fill="url(#gCyl)" opacity=".96"/>
<path d="M740 451l21-25 37 1 1 82a29 14 0 0 1-58 1z" fill="#485f61" opacity=".5"/>
<ellipse cx="770" cy="509" rx="29" ry="14" fill="#3a7a7c" fill-opacity=".7" stroke="#3fc9ca" stroke-width="1.500"/>
<ellipse cx="765.500" cy="360" rx="30.500" ry="10.500" fill="#3e8082" stroke="#3fc9ca" stroke-width="1.600"/>
<path d="M735 361l6 149M796.500 360l2.500 148M757 370l5 152M776 370l2 124" fill="none" stroke="#3bbfc0"/>
<path d="M824 402l4-8 40 4-1 89-4 6-40-4z" fill="#b7b9bc"/>
<path d="M827 403h33v31l-33-2z" fill="#d2d4d7"/><path d="M827 432l33 2v58l-35-3z" fill="#bd9da0"/>
<path d="M828.500 403v77l35 3M828 480l-4 9M860.500 404v52" stroke="#888" fill="none"/><path d="M861 456l-17 35" stroke="#e4d8d9"/>
<path d="M823.500 402l4.500-7.500 40 3.500-4 7.500zM823.500 402v87.500l40 3.500V405.500M867.500 398V488l-4 5" fill="none" stroke="#000" stroke-width="1.800"/>
<path d="M651.500 527v28M650.500 555l29.500 1M651.500 554l6.500-6" stroke="#565c63" fill="none"/><g fill="#575c62" font-size="13"><text x="653" y="526">z</text><text x="659" y="543">y</text><text x="683" y="557">x</text></g>
</svg></section>
<aside class="panel">
<div class="ptabs"><i><svg><use href="#i-wheel"/></svg></i><i class="on"><svg><use href="#i-layers"/></svg></i><i><svg><use href="#p-bomb"/></svg></i><i><svg><use href="#p-brush"/></svg></i><i><svg><use href="#p-folder"/></svg></i><i><svg><use href="#p-win"/></svg></i><i></i><svg class="pg" viewBox="0 0 16 16"><circle cx="8" cy="8" r="5.500" fill="#c5c5c5" stroke="#b9b9b9" stroke-width="3" stroke-dasharray="2.500 1.800"/><circle cx="8" cy="8" r="2" fill="#eee"/></svg></div>
<div class="ptool"><i><svg><use href="#i-new"/></svg></i><i><svg><use href="#i-copy"/></svg></i><i><svg><use href="#p-x"/></svg></i><i><svg><use href="#p-up"/></svg></i><i><svg><use href="#p-dn"/></svg></i><i><svg><use href="#p-left"/></svg></i><i class="m"><svg><use href="#p-fun"/></svg></i><i class="m g"><svg><use href="#p-doc"/></svg></i><i class="m"><svg><use href="#p-ham"/></svg></i><i><svg><use href="#i-help"/></svg></i></div>
<div class="list">
<div class="lh"><span>Name</span><u></u><u></u><u></u><u></u><u class="mat">Material</u></div>
<div class="lr"><span class="n l1"><b>Default</b></span><s><svg viewBox="0 0 14 12"><path d="M1 6l4 4 8-9" fill="none" stroke="#111" stroke-width="1.500"/></svg></s><s></s><s></s><s><em class="k"></em></s><s><q></q></s></div>
<div class="lr"><span class="n l1 ex">AUX</span><s></s><s><svg><use href="#l-on"/></svg></s><s><svg><use href="#l-un"/></svg></s><s><em class="k"></em></s><s><q></q></s></div>
<div class="lr"><span class="n l2">L__NORTE</span><s></s><s><svg><use href="#l-off"/></svg></s><s><svg><use href="#l-un"/></svg></s><s><em class="blue"></em></s><s><q></q></s></div>
<div class="lr sel"><span class="n l2">PONTOS_AUX</span><s></s><s><svg><use href="#l-offsel"/></svg></s><s><svg><use href="#l-unsel"/></svg></s><s><em class="or"></em></s><s><q></q></s></div>
<div class="lr"><span class="n l1">CONTEXTO</span><s></s><s><svg><use href="#l-on"/></svg></s><s><svg><use href="#l-un"/></svg></s><s><em class="teal"></em></s><s><q></q></s></div>
<div class="lr"><span class="n l1 ex">ANALISE</span><s></s><s><svg><use href="#l-on"/></svg></s><s><svg><use href="#l-un"/></svg></s><s><em class="pur"></em></s><s><q></q></s></div>
<div class="lr"><span class="n l2">TERRENO</span><s></s><s><svg><use href="#l-on"/></svg></s><s><svg><use href="#l-un"/></svg></s><s><em class="red"></em></s><s><q></q></s></div>
<div class="lr"><span class="n l2">EDF</span><s></s><s><svg><use href="#l-on"/></svg></s><s><svg><use href="#l-un"/></svg></s><s><em class="k"></em></s><s><q></q></s></div>
<div class="hs"><svg viewBox="0 0 17 15"><path d="M10 4L7 7.500l3 3.500" fill="none" stroke="#444" stroke-width="1.800"/></svg><div></div><svg viewBox="0 0 17 15"><path d="M7 4l3 3.500L7 11" fill="none" stroke="#444" stroke-width="1.800"/></svg></div>
</div>
</aside>
</main>
<nav class="vtabs"><span>Perspective</span><span class="on">Top</span><span class="on"><svg viewBox="0 0 10 10"><path d="M3.500.500h3v3h3v3h-3v3h-3v-3h-3v-3h3z" fill="none" stroke="#666"/></svg></span></nav>
<div class="osnap"><label class="c"><i></i>End</label><label><i></i>Near</label><label class="c"><i></i>Point</label><label class="c"><i></i>Mid</label><label class="c"><i></i>Cen</label><label class="c"><i></i>Int</label><label><i></i>Perp</label><label><i></i>Tan</label><label class="c"><i></i>Quad</label><label><i></i>Knot</label><label class="c"><i></i>Vertex</label><label class="d"><i></i>Project</label><label class="d"><i></i>Disable</label></div>
<div class="hist"><div class="lines"><p>Image tile saved: C:\Users\FERNANDO\AppData\Local\Temp\69c99511-f6db-4c7d-9b52-83f206f28007\0;1.png</p><p>Image tile saved: C:\Users\FERNANDO\AppData\Local\Temp\69c99511-f6db-4c7d-9b52-83f206f28007\1;1.png</p><p>Image tile saved: C:\Users\FERNANDO\AppData\Local\Temp\69c99511-f6db-4c7d-9b52-83f206f28007\2;1.png</p><p>Image tile saved: C:\Users\FERNANDO\AppData\Local\Temp\69c99511-f6db-4c7d-9b52-83f206f28007\3;1.png</p></div>
<svg class="vs" viewBox="0 0 15 54"><path fill="#f0f0f0" d="M0 0h15v54H0z"/><path fill="#cdcdcd" d="M0 20h15v17H0z"/><path d="M4.500 11L8 7.500l3.500 3.500M4.500 44L8 47.500l3.500-3.500" fill="none" stroke="#444" stroke-width="1.800"/></svg></div>
<div class="cmd"><span><b>Brep to reference</b> ( <u>M</u>ode=<em>Reference</em> ):</span><svg viewBox="0 0 14 17"><path d="M.5.500h13v7H.5zM.5 9h13v7H.5z" fill="#f3f3f3" stroke="#aaa"/><path d="M4 6l3-3 3 3zM4 11l3 3 3-3z"/></svg></div>
<div class="status"><span>CPlane</span><span>x 184.839</span><span>y 338.068</span><span>z 0.000</span><span>Meters</span><span class="lay"><i></i>Default</span><span class="a">Grid Snap</span><span>Ortho</span><span>Planar</span><span class="a">Osnap</span><span class="a">SmartTrack</span><span class="a">Gumball</span><span>Record History</span><span>Filter</span><span class="last">Minutes from last save: 112</span></div>
<footer>
<i class="w"><svg viewBox="0 0 16 16"><path d="M0 2.500l6.500-1v6H0zM7.500 1.300L16 0v7.500H7.500zM0 8.500h6.500v6L0 13.500zM7.500 8.500H16V16l-8.500-1.300z" fill="#fff"/></svg></i>
<i class="run"><svg viewBox="0 0 18 18"><circle cx="9" cy="10" r="7.500" fill="#ff6a2a"/><path d="M2 10C1 6 3 3 4 2c1 3 4 3 5 4l3-5c4 4 7 12 1 15C8 19 2 15 2 10z" fill="#ff9640"/><path d="M12 1c4 4 5 10 1 14 1-6-3-8-4-9z" fill="#ffdb43"/><circle cx="9" cy="11" r="4" fill="#8847cd"/><path d="M2 9c2-2 5-2 7 0-3 0-4 3-2 5-3 0-5-2-5-5z" fill="#ff454e"/></svg></i>
<i><svg viewBox="0 0 18 18"><path d="M1 2h16v11H1z" fill="#45b8f3" stroke="#a5e1fc"/><path d="M1 13L15 2h2v11z" fill="#1789ce"/><path d="M7 13h4v3H7z" fill="#99bfd2"/><path d="M3 16h12" stroke="#d9edf5" stroke-width="1.500"/></svg></i>
<i class="run dark"><svg><use href="#rhino"/></svg></i>
<i class="run"><svg viewBox="0 0 18 18"><path d="M13 1l4 2v12l-4 2L6 10l-4 3-1-1 4-3-4-3 1-1 4 3zM13 6L9 9l4 3z" fill="#25a0ed" fill-rule="evenodd"/><path d="M13 1l4 2v12l-4 2z" fill="#3bb7f4"/></svg></i>
<i class="run ex"><svg viewBox="0 0 18 18"><path d="M1 2h7l2 2h7v12H1z" fill="#ffc94d"/><path d="M1 6h16v10H1z" fill="#ffe08a"/><path d="M4 16v-5h10v5h-3v-3H7v3z" fill="#3697d8"/></svg></i>
<i class="run"><svg viewBox="0 0 18 18"><path d="M2 13l6-5H3.500V6H9L7.500 3.500" fill="none" stroke="#ef8926" stroke-width="1.600"/><ellipse cx="11.500" cy="10.500" rx="5.500" ry="5" fill="#ef8926"/><circle cx="11.500" cy="10.500" r="3.500" fill="#fff"/><circle cx="11.500" cy="10.500" r="2" fill="#2c70aa"/></svg></i>
<svg class="tray" viewBox="0 0 96 30"><g fill="none" stroke="#eee" stroke-width="1.200"><path d="M5.500 17.500l5-5 5 5"/><path d="M30.500 21c0-6 4-10 10-11M33.500 21c0-4 3-7 7-8M36.500 21c0-3 2-4 4-5M39 21c0-1 0-2 2-2M50.500 13h2l4-3.500v11l-4-3.500h-2zM59 12.500c1.500 1.500 1.500 3.500 0 5M61.500 10.500c2.500 3 2.500 6 0 9M64 8.500c3.500 4 3.500 9 0 13"/></g><path d="M79.500 8l3.500 2.500-3.500 2.500-3.500-2.500zM86.500 8l3.500 2.500-3.500 2.500-3.500-2.500zM79.500 13l3.500 2.500-3.500 2.500-3.500-2.500zM86.500 13l3.500 2.500-3.500 2.500-3.500-2.500zM83 17.500l3.500 2.300-3.500 2.200-3.500-2.200z" fill="#fff"/></svg>
<div class="clock"><span>21:44:59</span><span>qua 14 out</span></div>
<svg class="note" viewBox="0 0 17 16"><path d="M0 0h16v13h-5l-3 3-3-3H0z" fill="#fff"/><path d="M3 3.500h10M3 6.500h10M3 9.500h7" stroke="#111"/></svg>
</footer>
<div class="tip">EDF<br>Current: No</div>
<svg class="ink" viewBox="0 0 1366 768"><g fill="none" stroke="#ae1a64" stroke-width="5" stroke-linecap="round" stroke-linejoin="round"><path d="M961 281c12-4 24-10 39-12-8 10-24 18-37 28-7 6 0 7 11 6 18 0 33-4 49-8M983 332c-27 5-43 19-64 28-15 7-47 23-63 25M848.500 376v16c2 4 6 3 12 5" /><path d="M1143 423c10 0 13-11 16-27-1 17-2 32 0 45M1130 456c20 1 40-3 57-10M1188 495c0-9 2-12 5-19 19-42 39-96 60-139M1210 356c17-3 34-10 43-19 2 10 3 20 7 28"/><path d="M1245 285c12 1 24 0 31 1M1249 289c-1 19 1 27-2 38 1 7 8 8 31 6 1-14-2-28 0-44" stroke-width="5.500"/></g></svg>
</body>
</html>
```
FILE: styles.css
```css
* { box-sizing: border-box; }
body { margin: 0; width: 1366px; height: 768px; overflow: hidden; position: relative; display: flex; flex-direction: column; background: #e9ebef; color: #111; font: 12px/16px "Open Sans", "Noto Sans", sans-serif; letter-spacing: -.3px; white-space: nowrap; }
.defs { position: absolute; width: 0; height: 0; }
svg { display: block; flex: none; }
i { font-style: normal; flex: none; }
header { height: 41px; background: #fff; flex: none; }
.titlebar { height: 24px; display: flex; align-items: center; padding-left: 2px; gap: 4px; }
.titlebar span { letter-spacing: .28px; padding-top: 2px; }
.app { width: 17px; height: 17px; margin-bottom: 3px; background: #242424; }
.wc { width: 120px; height: 20px; margin: 0 5px 4px auto; }
.menu { display: flex; height: 17px; padding-left: 7px; line-height: 18px; letter-spacing: -.15px; }
.menu span { flex: none; }
.menu span:nth-child(1) { width: 32px; }
.menu span:nth-child(2) { width: 34px; }
.menu span:nth-child(3) { width: 39px; }
.menu span:nth-child(4) { width: 45px; }
.menu span:nth-child(5) { width: 53px; }
.menu span:nth-child(6) { width: 40px; }
.menu span:nth-child(7) { width: 43px; }
.menu span:nth-child(8) { width: 71px; }
.menu span:nth-child(9) { width: 67px; }
.menu span:nth-child(10) { width: 41px; }
.menu span:nth-child(11) { width: 55px; }
.menu span:nth-child(12) { width: 51px; }
.menu span:nth-child(13) { width: 48px; }
.menu span:nth-child(14) { width: 80px; }
.tabs { height: 23px; padding-top: 6px; display: flex; flex: none; border-bottom: 1px solid #bfc8dc; letter-spacing: -.33px; }
.tabs span { position: relative; z-index: 0; height: 16px; text-align: center; padding-left: 0; background: #b9c4db; clip-path: polygon(10px 0, calc(100% - 2px) 0, 100% 2px, 100% 100%, 0 100%); color: #222; line-height: 18px; }
.tabs span::before { content: ""; position: absolute; z-index: -1; inset: 1px 1px 0 1px; background: #dadbdc; clip-path: polygon(9px 0, calc(100% - 2px) 0, 100% 2px, 100% 100%, 0 100%); }
.tabs .on { margin-bottom: -1px; height: 17px; padding-left: 0; }
.tabs .on::before { background: #eceef2; }
.tabs span:nth-child(1) { width: 69px; }
.tabs span:nth-child(2) { width: 64px; }
.tabs span:nth-child(3) { width: 65px; }
.tabs span:nth-child(4) { width: 59px; }
.tabs span:nth-child(5) { width: 52px; }
.tabs span:nth-child(6) { width: 107px; }
.tabs span:nth-child(7) { width: 65px; }
.tabs span:nth-child(8) { width: 74px; }
.tabs span:nth-child(9) { width: 82px; }
.tabs span:nth-child(10) { width: 90px; }
.tabs span:nth-child(11) { width: 77px; }
.tabs span:nth-child(12) { width: 80px; }
.tabs span:nth-child(13) { width: 88px; }
.tabs span:nth-child(14) { width: 64px; }
.tabs span:nth-child(15) { width: 74px; }
.tuner { width: 20px; height: 20px; margin: -3px 0 0 auto; }
.toolbar { height: 43px; flex: none; padding: 1px 0 0 1px; display: flex; }
.toolbar i, .tools i { width: 28px; height: 28px; position: relative; }
.toolbar svg, .tools svg { width: 28px; height: 28px; }
.m { position: relative; }
.m::after { content: ""; position: absolute; right: 1px; bottom: 1px; width: 6px; height: 6px; background: #666; clip-path: polygon(100% 0, 100% 100%, 0 100%); }
main { display: flex; height: 484px; flex: none; }
.tools { width: 64px; padding: 1px 0 0; display: grid; grid-template-columns: 28px 28px; grid-auto-rows: 28.06px; align-content: start; }
.raq { font: bold 17px/26px "Open Sans", sans-serif; text-align: center; padding-left: 12px; }
.vp { position: relative; background: #9da3ab; border: 1px solid #b6c1d6; border-top: 1px solid #8f969f; width: 548px; margin-right: 2px; }
.vp + .vp { width: 479px; margin-right: 7px; }
.vlabel { position: absolute; left: 0; top: 1px; width: 47px; height: 17px; display: flex; background: #bcc1c8; color: #444; padding-left: 7px; line-height: 17px; letter-spacing: -.05px; }
.vlabel.act { background: #84a2c4; color: #000; font-weight: bold; }
.vlabel.wide { width: 92px; background: #c1c5ca; }
.vlabel b { margin: 3px 0 3px auto; width: 11px; border-left: 1px solid #333; position: relative; }
.vlabel b::after { content: ""; position: absolute; left: 1px; top: 4px; border: 4px solid transparent; border-top-color: #222; }
.scene { position: absolute; inset: 0; width: 546px; height: 482px; }
.wide + .scene { width: 478px; left: -1px; }
.panel { width: 266px; height: 500px; margin-top: 2px; border: 1px solid #bcc6dc; border-top: 0; background: #f3f5fa; position: relative; }
.ptabs { height: 21px; margin-left: -1px; display: flex; border-bottom: 1px solid #bcc6dc; background: #e9ebef; }
.ptabs i { width: 35px; height: 20px; padding: 1px 0 0 2px; background: #dbdcdf; border: 1px solid #c0c9dd; border-width: 1px 0 0 1px; border-radius: 3px 0 0 0; clip-path: polygon(0 0, 72% 0, 100% 80%, 100% 100%, 0 100%); }
.ptabs i:nth-child(7) { width: 40px; }
.ptabs .on { background: #f3f5fa; height: 21px; }
.ptabs i svg { width: 20px; height: 20px; }
.pg { width: 15px; height: 15px; margin: 4px 0 0; }
.ptool { height: 23px; display: flex; padding: 2px 0 0 2px; border-bottom: 1px solid #bcc6dc; }
.ptool i { width: 24.6px; height: 18px; }
.ptool svg { width: 20px; height: 20px; margin-top: -1px; }
.ptool .m::after { width: 4px; height: 4px; background: #111; right: 4px; bottom: 0; }
.ptool .g::after { background: #aaa; }
.list { height: 455px; width: 261px; background: #fff; position: relative; display: flex; flex-direction: column; }
.lh { display: flex; height: 25px; line-height: 26px; padding-left: 6px; flex: none; letter-spacing: -.15px; }
.lh span { width: 133px; }
.lh u { width: 17px; text-decoration: none; border-left: 1px solid #dcdfe5; }
.lh .mat { padding-left: 5px; }
.lr { height: 19px; flex: none; display: flex; align-items: center; border-bottom: 1px dotted #ddd; }
.lr .n { width: 138px; line-height: 18px; position: relative; padding-top: 1px; }
.lr .l1 { padding-left: 23px; }
.lr .l2 { padding-left: 39px; }
.ex::before { content: ""; position: absolute; left: 8px; top: 4px; width: 7px; height: 7px; border: solid #444; border-width: 0 1.5px 1.5px 0; transform: rotate(45deg) ; }
.lr s { width: 17px; display: flex; justify-content: center; text-decoration: none; padding-top: 1px; }
.lr s:nth-child(5) { width: 19px; }
.lr s:last-child { width: 18px; }
.lr svg { width: 12px; height: 14px; }
.lr em { width: 12px; height: 12px; border: 1px solid #222; }
.lr q { width: 15px; height: 15px; border-radius: 50%; background: #f8f8f8; border: 1px solid #ebebeb; }
.lr q::before, .lr q::after { content: none; }
.sel { background: #0078d7; color: #fff; }
.sel q { background: #fff; }
.sel em { border-color: #fff; }
.k { background: #000; } .blue { background: #00f; } .or { background: #ff7f00; } .teal { background: #3fbfbf; } .pur { background: #7f26cc; } .red { background: #bf3f3f; }
.hs { height: 16px; margin: auto 0 0; background: #f0f0f0; display: flex; }
.hs svg { width: 17px; height: 15px; }
.hs div { width: 127px; height: 15px; background: #cdcdcd; margin-right: auto; }
.vtabs { height: 26px; flex: none; display: flex; padding-left: 64px; }
.vtabs span { height: 19px; text-align: center; line-height: 20px; position: relative; z-index: 0; margin-top: 1px; background: #b9c4db; clip-path: polygon(0 0, 100% 0, 100% 80%, calc(100% - 3px) 100%, 9px 100%, 0 50%); }
.vtabs span::before { content: ""; position: absolute; z-index: -1; inset: 0 1px 1px 1px; background: #d7d8da; clip-path: polygon(0 0, 100% 0, 100% 80%, calc(100% - 3px) 100%, 9px 100%, 0 50%); }
.vtabs .on::before { background: #eceef2; }
.vtabs span:nth-child(1) { width: 76px; padding-left: 4px; }
.vtabs span:nth-child(2) { width: 33px; padding-left: 3px; }
.vtabs span:nth-child(3) { width: 27px; }
.vtabs svg { width: 10px; height: 10px; margin: 5px 0 0 9px; }
.osnap { height: 23px; flex: none; display: flex; padding: 0 0 0 3px; border-bottom: 1px solid #d1d6df; letter-spacing: -.2px; }
.osnap label { display: flex; align-items: center; gap: 3px; height: 22px; }
.osnap i { width: 13px; height: 13px; border: 1px solid #333; background: #fff; position: relative; }
.osnap .c i::after { content: ""; position: absolute; left: 4px; top: 0; width: 4px; height: 8px; border: solid #222; border-width: 0 1.2px 1.2px 0; transform: rotate(42deg); }
.osnap .d i { border-color: #bbb; background: #ddd; width: 11px; height: 11px; margin-right: 1px; }
.osnap label:nth-child(1) { width: 43px; }
.osnap label:nth-child(2) { width: 48px; }
.osnap label:nth-child(3) { width: 51px; }
.osnap label:nth-child(4) { width: 44px; }
.osnap label:nth-child(5) { width: 44px; }
.osnap label:nth-child(6) { width: 37px; }
.osnap label:nth-child(7) { width: 47px; }
.osnap label:nth-child(8) { width: 42px; }
.osnap label:nth-child(9) { width: 52px; }
.osnap label:nth-child(10) { width: 48px; }
.osnap label:nth-child(11) { width: 57px; }
.osnap label:nth-child(12) { width: 68px; }
.hist { height: 56px; flex: none; margin-top: 1px; border-bottom: 1px solid #b9c2d6; background: #fff; display: flex; overflow: hidden; padding-left: 2px; }
.lines { flex: 1; margin-top: -4px; }
.hist p { margin: 0; line-height: 15px; letter-spacing: -.31px; }
.vs { width: 15px; height: 54px; margin-right: 2px; }
.cmd { height: 18px; flex: none; background: #fff; padding-left: 2px; display: flex; justify-content: space-between; line-height: 16px; }
.cmd b { letter-spacing: -.25px; }
.cmd svg { width: 14px; height: 17px; margin-right: 2px; }
.status { height: 20px; margin-top: 3px; flex: none; border-top: 1px solid #b9c2d4; display: flex; line-height: 19px; }
.status span { border-right: 1px solid #bcc6dc; text-align: center; }
.status .a { background: #e0effb; font-weight: bold; letter-spacing: -.5px; }
.status span:nth-child(1) { width: 50px; }
.status span:nth-child(2), .status span:nth-child(3), .status span:nth-child(4), .status span:nth-child(5) { width: 88px; }
.status .lay { width: 168px; display: flex; gap: 2px; padding: 2px 0 0 3px; line-height: 16px; }
.lay i { width: 14px; height: 15px; background: #000; }
.status span:nth-child(7) { width: 65px; }
.status span:nth-child(8) { width: 46px; }
.status span:nth-child(9) { width: 46px; }
.status span:nth-child(10) { width: 48px; }
.status span:nth-child(11) { width: 73px; }
.status span:nth-child(12) { width: 60px; }
.status span:nth-child(13) { width: 92px; }
.status span:nth-child(14) { width: 40px; }
.status .last { width: 320px; text-align: left; padding-left: 0; letter-spacing: -.4px; }
footer { height: 30px; flex: none; background: #101010; display: flex; align-items: center; color: #eee; }
footer i { width: 37px; height: 30px; display: flex; align-items: center; justify-content: center; }
footer i svg { width: 18px; height: 18px; }
footer .w { width: 38px; padding-right: 3px; }
footer .w svg { width: 16px; height: 16px; }
.run { box-shadow: inset 0 -2px #76b9ed; }
footer .run:not(.dark):not(.ex) { width: 29px; margin: 0 4px; }
footer .dark { background: #333; }
footer .run.ex { background: #99571c; box-shadow: inset 0 -2px #fb7b13; }
footer .run.ex::before { content: none; }
.tray { width: 96px; height: 30px; margin-left: auto; }
.clock { display: flex; flex-direction: column; width: 62px; text-align: center; line-height: 15px; margin-left: 2px; letter-spacing: -.4px; }
.note { width: 17px; height: 16px; margin: 0 13px 0 15px; }
footer::after { content: ""; width: 5px; height: 30px; border-left: 1px solid #555; margin-left: 5px; }
.tip { position: absolute; left: 1247px; top: 341px; width: 75px; height: 35px; background: #fff; border: 1px solid #767676; box-shadow: 3px 3px 2px #999; color: #555; line-height: 15px; padding: 1px 5px; }
.ink { position: absolute; inset: 0; width: 1366px; height: 768px; pointer-events: none; }
```
